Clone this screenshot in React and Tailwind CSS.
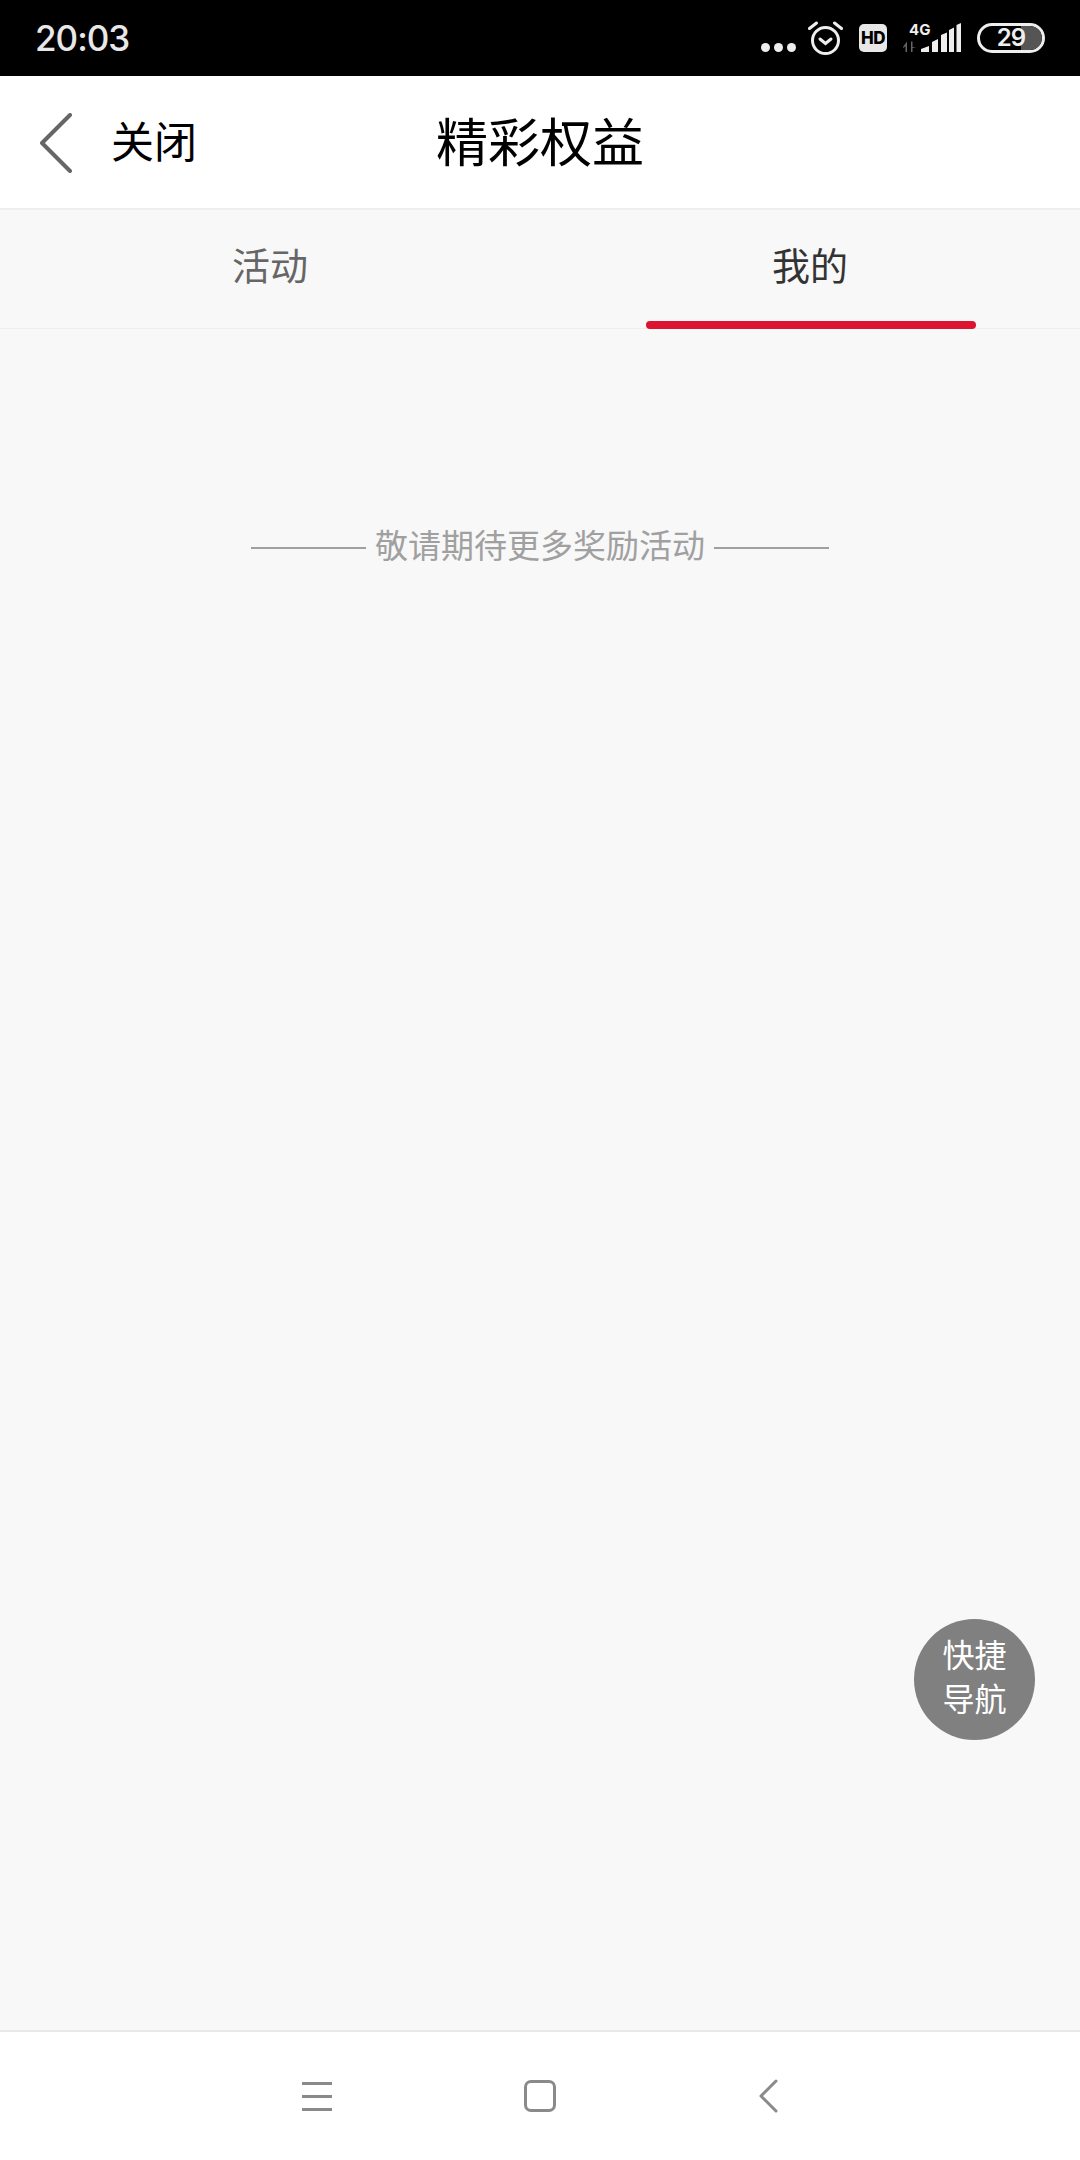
function Alarm() {
  return (
    <svg width="35" height="34" viewBox="0 0 35 34" fill="none" stroke="#eee" strokeLinecap="round">
      <circle cx="17.5" cy="19.5" r="13" strokeWidth="3" />
      <path d="M12 18 L17.5 22.5 L23 18" strokeWidth="3" />
      <path d="M1.5 7.5 L8.5 2 M33.5 7.5 L26.5 2" strokeWidth="3" />
    </svg>
  );
}
function Signal() {
  return (
    <svg width="58" height="32" viewBox="0 0 58 32" fill="#eee">
      <path d="M0 25 L4 19.5 V30 H2.5 V24 L0.5 26 Z" fill="#666" />
      <path d="M8 30 L8 19.5 H9.5 V25 L13 26 L9.5 26 V30 Z" fill="#666" />
      <path d="M18 30 V27 L26 24 V30 Z" />
      <path d="M29 30 V20 L35 17 V30 Z" />
      <path d="M38 30 V13 L44 10.5 V30 Z" />
      <path d="M46 30 V8 L51 5.5 V30 Z" />
      <path d="M53.5 30 V3 L58 1 V30 Z" />
    </svg>
  );
}
function Battery() {
  return (
    <div className="relative w-[68px] h-[30px] rounded-full border-[3px] border-[#eee] overflow-hidden flex items-center justify-center">
      <div className="absolute right-0 top-0 bottom-0 w-[21px] bg-[#555] rounded-r-full" />
      <span className="relative text-[24px] font-semibold text-[#eee] leading-none tracking-[-1px] font-['Inter',sans-serif]">29</span>
    </div>
  );
}
function Back({ w, h, color, sw }) {
  return (
    <svg width={w} height={h} viewBox={`0 0 ${w} ${h}`} fill="none" stroke={color} strokeWidth={sw} strokeLinecap="round" strokeLinejoin="round">
      <path d={`M${w - 2} 2 L2 ${h / 2} L${w - 2} ${h - 2}`} />
    </svg>
  );
}
export default function App() {
  return (
    <div className="w-[1080px] h-[2160px] flex flex-col bg-[#f8f8f8] font-['Noto_Sans_CJK_SC','Noto_Sans',sans-serif]">
      <div className="h-[76px] bg-black flex items-center justify-between pl-[35px] pr-[35px] shrink-0">
        <span className="text-[35px] font-medium text-[#e8e8e8] leading-none tracking-[-1px] font-['Inter',sans-serif]">20:03</span>
        <div className="flex items-center">
          <div className="flex gap-[4px] mt-[19px] mr-[12px]">
            <span className="w-[9px] h-[9px] rounded-full bg-[#eee]" />
            <span className="w-[9px] h-[9px] rounded-full bg-[#eee]" />
            <span className="w-[9px] h-[9px] rounded-full bg-[#eee]" />
          </div>
          <Alarm />
          <div className="ml-[16px] w-[28px] h-[28px] rounded-[5px] bg-[#e8e8e8] flex items-center justify-center">
            <span className="text-[17px] font-extrabold text-black leading-none font-['Inter',sans-serif] tracking-[-0.5px]">HD</span>
          </div>
          <div className="relative ml-[16px] mr-[16px]">
            <span className="absolute left-[6px] top-[0px] text-[15px] font-bold text-[#eee] leading-none font-['Inter',sans-serif]">4G</span>
            <Signal />
          </div>
          <Battery />
        </div>
      </div>
      <div className="h-[134px] bg-white border-b-2 border-[#eeeeee] relative flex items-center justify-center shrink-0">
        <div className="absolute left-[40px] top-[37px] flex items-center">
          <Back w={32} h={60} color="#666" sw={4} />
        </div>
        <span className="absolute left-[111px] top-[36px] text-[43px] leading-[54px] text-black font-normal">关闭</span>
        <span className="text-[52px] leading-[64px] text-black mb-[5px]">精彩权益</span>
      </div>
      <div className="h-[119px] bg-[#f8f8f8] border-b border-[#eeeeee] flex shrink-0">
        <div className="flex-1 flex items-center justify-center pb-[11px]">
          <span className="text-[38px] leading-[48px] text-[#666]">活动</span>
        </div>
        <div className="flex-1 relative flex items-center justify-center pb-[11px]">
          <span className="text-[38px] leading-[48px] text-[#333]">我的</span>
          <div className="absolute left-[106px] top-[111px] w-[330px] h-[8px] rounded-full bg-[#dc1430]" />
        </div>
      </div>
      <div className="flex-1 relative">
        <div className="flex items-center justify-center gap-[9px] pt-[192px]">
          <div className="w-[115px] h-[2px] bg-[#a0a0a0] mt-[8px]" />
          <span className="text-[33px] leading-[46px] text-[#a0a0a0]">敬请期待更多奖励活动</span>
          <div className="w-[115px] h-[2px] bg-[#a0a0a0] mt-[8px]" />
        </div>
        <div className="absolute left-[914px] top-[1290px] w-[121px] h-[121px] rounded-full bg-[#808080] flex flex-col items-center justify-center text-white text-[32px] leading-[44px] pb-[10px]">
          <span>快捷</span>
          <span>导航</span>
        </div>
      </div>
      <div className="h-[130px] bg-white border-t-2 border-[#e8e8e8] flex items-center shrink-0">
        <div className="flex flex-col gap-[10px] w-[30px] ml-[302px]">
          <div className="h-[3px] bg-[#8a8a8a]" />
          <div className="h-[3px] bg-[#8a8a8a]" />
          <div className="h-[3px] bg-[#8a8a8a]" />
        </div>
        <div className="w-[32px] h-[32px] rounded-[7px] border-[3px] border-[#8a8a8a] ml-[192px]" />
        <div className="ml-[203px] flex">
          <Back w={19} h={34} color="#8a8a8a" sw={3} />
        </div>
      </div>
    </div>
  );
}
